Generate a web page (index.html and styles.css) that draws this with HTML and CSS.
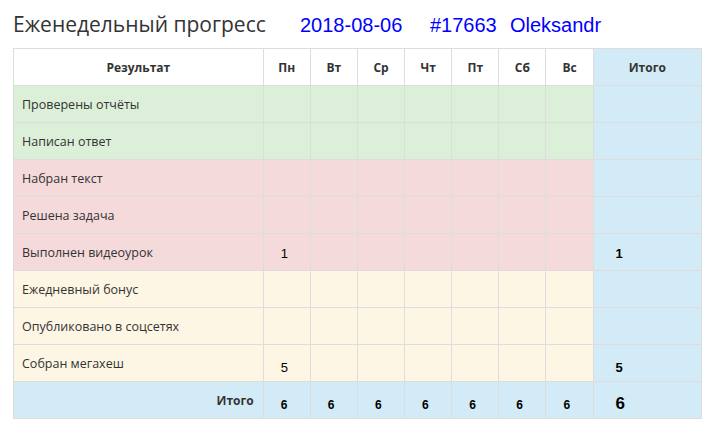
FILE: index.html
```html
<!DOCTYPE html>
<html lang="ru">
<head>
<meta charset="utf-8">
<title>Еженедельный прогресс</title>
<link rel="stylesheet" href="styles.css">
</head>
<body>
<div class="page">
  <div class="heading">
    <h1 class="title">Еженедельный прогресс</h1>
    <span class="meta meta-date">2018-08-06</span>
    <span class="meta meta-id">#17663</span>
    <span class="meta meta-name">Oleksandr</span>
  </div>
  <table class="progress">
    <colgroup>
      <col class="c-label">
      <col class="c-day"><col class="c-day"><col class="c-day"><col class="c-day">
      <col class="c-day"><col class="c-day"><col class="c-day">
      <col class="c-total">
    </colgroup>
    <thead>
      <tr>
        <th>Результат</th>
        <th>Пн</th><th>Вт</th><th>Ср</th><th>Чт</th><th>Пт</th><th>Сб</th><th>Вс</th>
        <th class="total">Итого</th>
      </tr>
    </thead>
    <tbody>
      <tr class="success"><td class="label">Проверены отчёты</td><td></td><td></td><td></td><td></td><td></td><td></td><td></td><td class="total"></td></tr>
      <tr class="success"><td class="label">Написан ответ</td><td></td><td></td><td></td><td></td><td></td><td></td><td></td><td class="total"></td></tr>
      <tr class="danger"><td class="label">Набран текст</td><td></td><td></td><td></td><td></td><td></td><td></td><td></td><td class="total"></td></tr>
      <tr class="danger"><td class="label">Решена задача</td><td></td><td></td><td></td><td></td><td></td><td></td><td></td><td class="total"></td></tr>
      <tr class="danger"><td class="label">Выполнен видеоурок</td><td class="num">1</td><td></td><td></td><td></td><td></td><td></td><td></td><td class="total num bold">1</td></tr>
      <tr class="warning"><td class="label">Ежедневный бонус</td><td></td><td></td><td></td><td></td><td></td><td></td><td></td><td class="total"></td></tr>
      <tr class="warning"><td class="label">Опубликовано в соцсетях</td><td></td><td></td><td></td><td></td><td></td><td></td><td></td><td class="total"></td></tr>
      <tr class="warning"><td class="label">Собран мегахеш</td><td class="num low">5</td><td></td><td></td><td></td><td></td><td></td><td></td><td class="total num bold low">5</td></tr>
    </tbody>
    <tfoot>
      <tr class="info">
        <th class="foot-label">Итого</th>
        <td class="num bold sum">6</td><td class="num bold sum">6</td><td class="num bold sum">6</td><td class="num bold sum">6</td>
        <td class="num bold sum">6</td><td class="num bold sum">6</td><td class="num bold sum">6</td>
        <td class="num bold grand">6</td>
      </tr>
    </tfoot>
  </table>
</div>
</body>
</html>
```

FILE: styles.css
```css
* { box-sizing: border-box; }

body {
  margin: 0;
  background: #fff;
  font-family: "Open Sans", "Noto Sans", sans-serif;
  color: #333;
}

.page {
  padding: 9px 0 0 13px;
}

.heading {
  display: flex;
  align-items: baseline;
  height: 39px;
}

.title {
  margin: 0;
  font-weight: 400;
  font-size: 21px;
  line-height: 30px;
  color: #333;
  width: 287px;
}

.meta {
  font-family: "Liberation Sans", Arial, sans-serif;
  font-size: 20px;
  color: #0000ff;
}

.meta-date { width: 130px; }
.meta-id { width: 80px; }

.progress {
  border-collapse: collapse;
  table-layout: fixed;
  width: 689px;
  border: 1px solid #ddd;
  font-size: 12.5px;
}

.c-label { width: 249px; }
.c-day { width: 47px; }
.c-total { width: 108px; }

.progress th,
.progress td {
  border: 1px solid #ddd;
  padding: 0 8px;
  height: 37px;
  vertical-align: middle;
}

.progress thead th {
  font-size: 12px;
  font-weight: 700;
  text-align: center;
  background: #fff;
}

.progress thead th.total {
  background: #d3ebf6;
}

.success td { background: #dcefd8; }
.danger td { background: #f5dadc; }
.warning td { background: #fef6e4; }
.progress td.total,
.info th,
.info td { background: #d3ebf6; }

.progress td.label {
  padding-left: 8px;
}

.progress td.num {
  font-family: "Liberation Sans", Arial, sans-serif;
  font-size: 13px;
  color: #000;
  padding: 3px 0 0 17px;
}

.progress td.total.num { padding-left: 22px; }

.progress td.num.low { padding-top: 9px; }

.bold { font-weight: 700; }

.progress td.sum {
  font-size: 12px;
  padding-top: 10px;
  padding-left: 17px;
}

.progress td.grand {
  font-size: 17px;
  padding-top: 7px;
  padding-left: 22px;
}

.progress th.foot-label {
  text-align: right;
  font-size: 12px;
  font-weight: 700;
  padding-right: 9px;
  padding-top: 1px;
}
```
